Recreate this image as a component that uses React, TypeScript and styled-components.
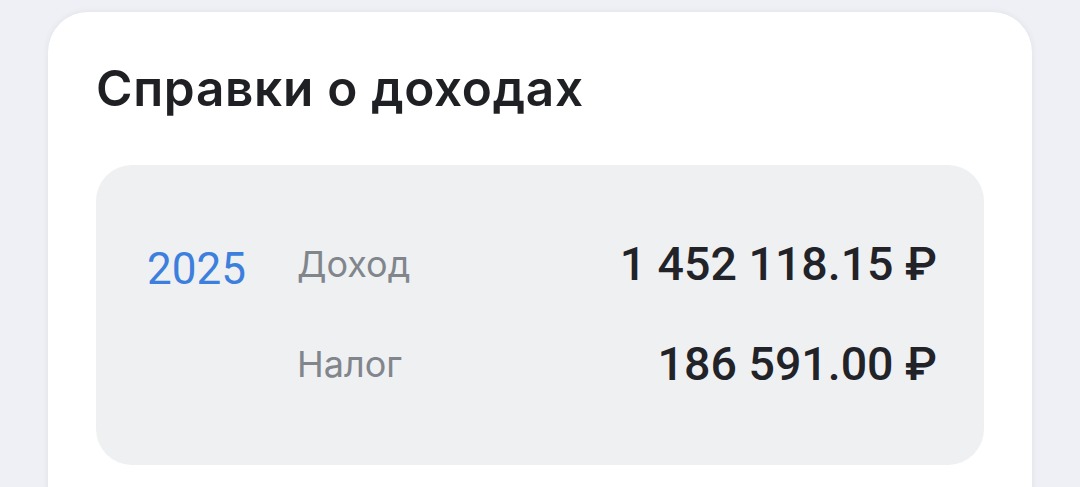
import styled, { createGlobalStyle } from 'styled-components';

const GlobalStyle = createGlobalStyle`
	html, body {
		margin: 0;
		padding: 0;
		background: #eef0f5;
		font-family: Roboto, 'Noto Sans', sans-serif;
	}
`;

const Page = styled.div`
	width: 1080px;
	height: 487px;
	overflow: hidden;
	padding: 12px 48px 0 48px;
	box-sizing: border-box;
`;

const Card = styled.section`
	background: #ffffff;
	border-radius: 40px 40px 0 0;
	box-shadow: 0 0 6px rgba(40, 50, 80, 0.08);
	padding: 44px 48px 40px 48px;
	height: 560px;
	box-sizing: border-box;
`;

const Title = styled.h2`
	margin: 0 0 45px 0;
	font-family: Inter, Roboto, sans-serif;
	font-weight: 600;
	font-size: 49.5px;
	line-height: 64px;
	color: #1f2024;
	letter-spacing: 0.7px;
`;

const Report = styled.div`
	background: #eff0f2;
	border-radius: 36px;
	height: 300px;
	box-sizing: border-box;
	padding: 63px 47px 0 51px;
	display: grid;
	grid-template-columns: 150px 1fr auto;
	grid-auto-rows: 100px;
`;

const Year = styled.div`
	margin-top: 5px;
	font-size: 44px;
	line-height: 72px;
	color: #3c7fdd;
	align-self: start;
`;

const Label = styled.div`
	grid-column: 2;
	font-family: Inter, Roboto, sans-serif;
	font-size: 36px;
	line-height: 72px;
	color: #81858c;
`;

const Amount = styled.div`
	grid-column: 3;
	text-align: right;
	font-size: 46.5px;
	font-weight: 500;
	line-height: 72px;
	color: #222328;
`;

const rows = [
	{ label: 'Доход', amount: '1 452 118.15 ₽' },
	{ label: 'Налог', amount: '186 591.00 ₽' },
];

export default function App() {
	return (
		<>
			<GlobalStyle />
			<Page>
				<Card>
					<Title>Справки о доходах</Title>
					<Report>
						<Year>2025</Year>
						{rows.map((row, index) => (
							<>
								{index > 0 && <div key={'gap' + index} />}
								<Label key={'l' + index}>{row.label}</Label>
								<Amount key={'a' + index}>{row.amount}</Amount>
							</>
						))}
					</Report>
				</Card>
			</Page>
		</>
	);
}
